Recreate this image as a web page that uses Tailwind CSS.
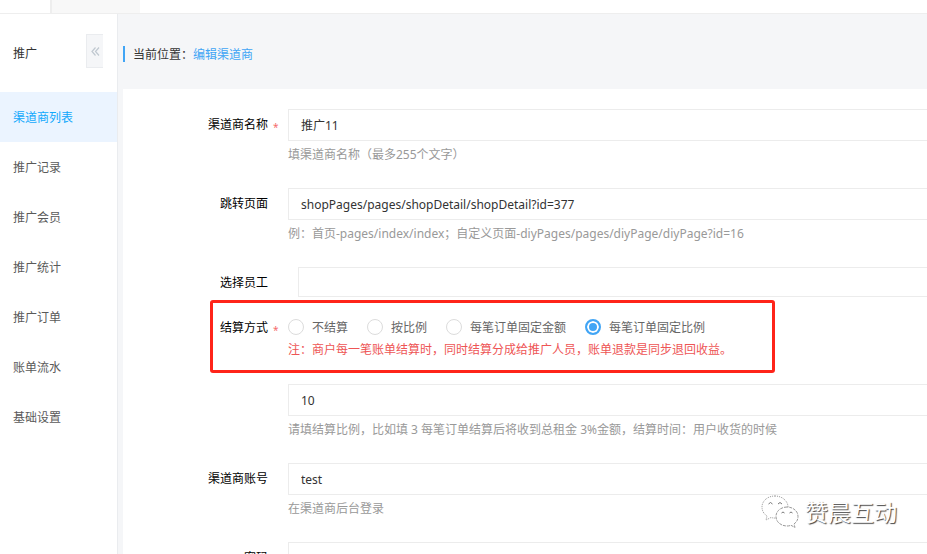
<!DOCTYPE html>
<html lang="zh-CN">
<head>
    <meta charset="UTF-8">
    <title>编辑渠道商</title>
    <script src="https://cdn.jsdelivr.net/npm/@tailwindcss/browser@4"></script>
</head>
<body class="flex flex-col h-screen overflow-hidden bg-[#f5f6f8] text-xs text-black font-['Noto_Sans','Noto_Sans_CJK_SC',sans-serif]">

    <!-- tab strip -->
    <header class="flex h-[14px] shrink-0 bg-white border-b border-[#eeeeee]">
        <div class="w-[50px]"></div>
        <div class="w-[90px] bg-[#f8f8f8] border-l-2 border-[#eeeeee]"></div>
    </header>

    <div class="flex flex-1 min-h-0">

        <!-- sidebar -->
        <aside class="w-[118px] shrink-0 bg-white border-r border-[#eaecef]">
            <div class="flex items-center justify-between h-[78px] pl-[13px] pr-[14px]">
                <h2 class="pt-[2px] text-[#333333]">推广</h2>
                <button type="button" aria-label="收起" class="flex items-center justify-center w-[17px] h-[34px] mb-[4px] bg-[#f5f6f8] border border-r-0 border-[#eaecef]">
                    <svg class="w-[9px] h-[9px]" viewBox="0 0 9 9" fill="none" stroke="#c0c8d0" stroke-width="1.2"><path d="M4.5 .5 1 4.500l3.500 4M8 .5 4.500 4.500l3.500 4"/></svg>
                </button>
            </div>
            <nav class="text-[#5a5a5a]">
                <a href="#" class="flex items-center h-[50px] px-[13px] pt-[2px] bg-[#ebf4ff] text-[#10a8fc]">渠道商列表</a>
                <a href="#" class="flex items-center h-[50px] px-[13px] pt-[2px]">推广记录</a>
                <a href="#" class="flex items-center h-[50px] px-[13px] pt-[2px]">推广会员</a>
                <a href="#" class="flex items-center h-[50px] px-[13px] pt-[2px]">推广统计</a>
                <a href="#" class="flex items-center h-[50px] px-[13px] pt-[2px]">推广订单</a>
                <a href="#" class="flex items-center h-[50px] px-[13px] pt-[2px]">账单流水</a>
                <a href="#" class="flex items-center h-[50px] px-[13px] pt-[2px]">基础设置</a>
            </nav>
        </aside>

        <main class="flex flex-col flex-1 min-w-0 pl-[5px]">
            <div class="flex items-center h-[75px] shrink-0 pt-[4px]">
                <div class="flex items-center h-4 border-l-2 border-[#41a5f5] pl-2 pt-[2px] text-[#333333]">当前位置：<a href="#" class="text-[#41a5f5]">编辑渠道商</a></div>
            </div>

            <form class="flex-1 min-h-0 overflow-hidden bg-white pt-5">
                <div class="flex h-[79px]">
                    <label for="name" class="w-[145px] shrink-0 text-right leading-8">渠道商名称</label>
                    <span class="w-5 shrink-0 pl-[5px] text-[10px] leading-9 text-[#f56c6c]">*</span>
                    <div class="flex-1 min-w-0">
                        <input id="name" type="text" value="推广11" class="w-full h-8 px-3 border border-r-0 border-[#ececec] text-[#333333]">
                        <p class="leading-[27px] text-[#999999]">填渠道商名称（最多255个文字）</p>
                    </div>
                </div>

                <div class="flex h-[79px]">
                    <label for="page" class="w-[145px] shrink-0 text-right leading-8">跳转页面</label>
                    <div class="flex-1 min-w-0 ml-5">
                        <input id="page" type="text" value="shopPages/pages/shopDetail/shopDetail?id=377" class="w-full h-8 px-3 border border-r-0 border-[#ececec] text-[#333333]">
                        <p class="leading-[27px] text-[#999999]">例：首页-pages/index/index；自定义页面-diyPages/pages/diyPage/diyPage?id=16</p>
                    </div>
                </div>

                <div class="flex h-[48px]">
                    <label for="staff" class="w-[145px] shrink-0 text-right leading-8">选择员工</label>
                    <div class="flex-1 min-w-0 ml-[30px]">
                        <input id="staff" type="text" class="w-full h-[30px] px-3 border border-r-0 border-[#ececec] text-[#333333]">
                    </div>
                </div>

                <fieldset class="relative flex h-[69px]">
                    <div class="absolute left-[87px] -top-[15px] w-[565px] h-[73px] border-[3px] border-[#ff2419] rounded-[3px] pointer-events-none"></div>
                    <span id="settle" class="w-[145px] shrink-0 text-right leading-[26px]">结算方式</span>
                    <span class="w-5 shrink-0 pl-[5px] text-[10px] leading-[30px] text-[#f56c6c]">*</span>
                    <div role="radiogroup" aria-labelledby="settle">
                        <div class="flex items-center gap-[19px] h-6 text-[#666666]">
                            <label class="flex items-center gap-2"><input type="radio" name="settle" class="appearance-none size-4 rounded-full border border-[#dcdcdc] checked:border-2 checked:border-[#41a5f5] checked:bg-[#41a5f5] checked:shadow-[inset_0_0_0_2px_white]"><span class="pt-[2px]">不结算</span></label>
                            <label class="flex items-center gap-2"><input type="radio" name="settle" class="appearance-none size-4 rounded-full border border-[#dcdcdc] checked:border-2 checked:border-[#41a5f5] checked:bg-[#41a5f5] checked:shadow-[inset_0_0_0_2px_white]"><span class="pt-[2px]">按比例</span></label>
                            <label class="flex items-center gap-2"><input type="radio" name="settle" class="appearance-none size-4 rounded-full border border-[#dcdcdc] checked:border-2 checked:border-[#41a5f5] checked:bg-[#41a5f5] checked:shadow-[inset_0_0_0_2px_white]"><span class="pt-[2px]">每笔订单固定金额</span></label>
                            <label class="flex items-center gap-2"><input type="radio" name="settle" checked class="appearance-none size-4 rounded-full border border-[#dcdcdc] checked:border-2 checked:border-[#41a5f5] checked:bg-[#41a5f5] checked:shadow-[inset_0_0_0_2px_white]"><span class="pt-[2px]">每笔订单固定比例</span></label>
                        </div>
                        <p class="leading-[22px] text-[#ee5555]">注：商户每一笔账单结算时，同时结算分成给推广人员，账单退款是同步退回收益。</p>
                    </div>
                </fieldset>

                <div class="flex h-[79px]">
                    <div class="flex-1 min-w-0 ml-[165px]">
                        <input type="text" value="10" aria-label="结算比例" class="w-full h-8 px-3 border border-r-0 border-[#ececec] text-[#333333]">
                        <p class="leading-[27px] text-[#999999]">请填结算比例，比如填 3 每笔订单结算后将收到总租金 3%金额，结算时间：用户收货的时候</p>
                    </div>
                </div>

                <div class="flex h-[79px]">
                    <label for="account" class="w-[145px] shrink-0 text-right leading-8">渠道商账号</label>
                    <div class="flex-1 min-w-0 ml-5">
                        <input id="account" type="text" value="test" class="w-full h-8 px-3 border border-r-0 border-[#ececec] text-[#333333]">
                        <p class="leading-[27px] text-[#999999]">在渠道商后台登录</p>
                    </div>
                </div>

                <div class="flex h-[79px]">
                    <label for="password" class="w-[145px] shrink-0 text-right leading-8">密码</label>
                    <div class="flex-1 min-w-0 ml-5">
                        <input id="password" type="password" class="w-full h-8 px-3 border border-r-0 border-[#ececec] text-[#333333]">
                    </div>
                </div>
            </form>
        </main>
    </div>

    <!-- watermark -->
    <div class="absolute right-[30px] bottom-[25px] flex items-center gap-[6px] text-[23px] leading-8 text-white [text-shadow:1px_1px_1px_#444444]">
        <svg class="w-[38px] h-[34px]" viewBox="0 0 38 34" fill="white" stroke="#999999" stroke-width="1">
            <path d="M14 1C6.500 1 1 6 1 12c0 4 2 7 5 9l-1 4 5-2.500c7 2 17-1 17-10.500C27 6 21 1 14 1z" stroke-dasharray="1 1"/>
            <path d="M26 12c-6 0-11 4-11 9.500S20 31 26 31c1.500 0 3-.3 4-.7l4 2.200-1-3.500c2.500-1.700 4-4.300 4-7.500C37 16 32 12 26 12z" stroke-dasharray="3 1"/>
            <path d="M7.500 9q2-3 4 0M17 9q2-3 4 0M20.500 18q1.500-2 3 0M28.500 18q1.500-2 3 0" fill="none" stroke="#777777"/>
        </svg>
        <span>赞晨互动</span>
    </div>

</body>
</html>
